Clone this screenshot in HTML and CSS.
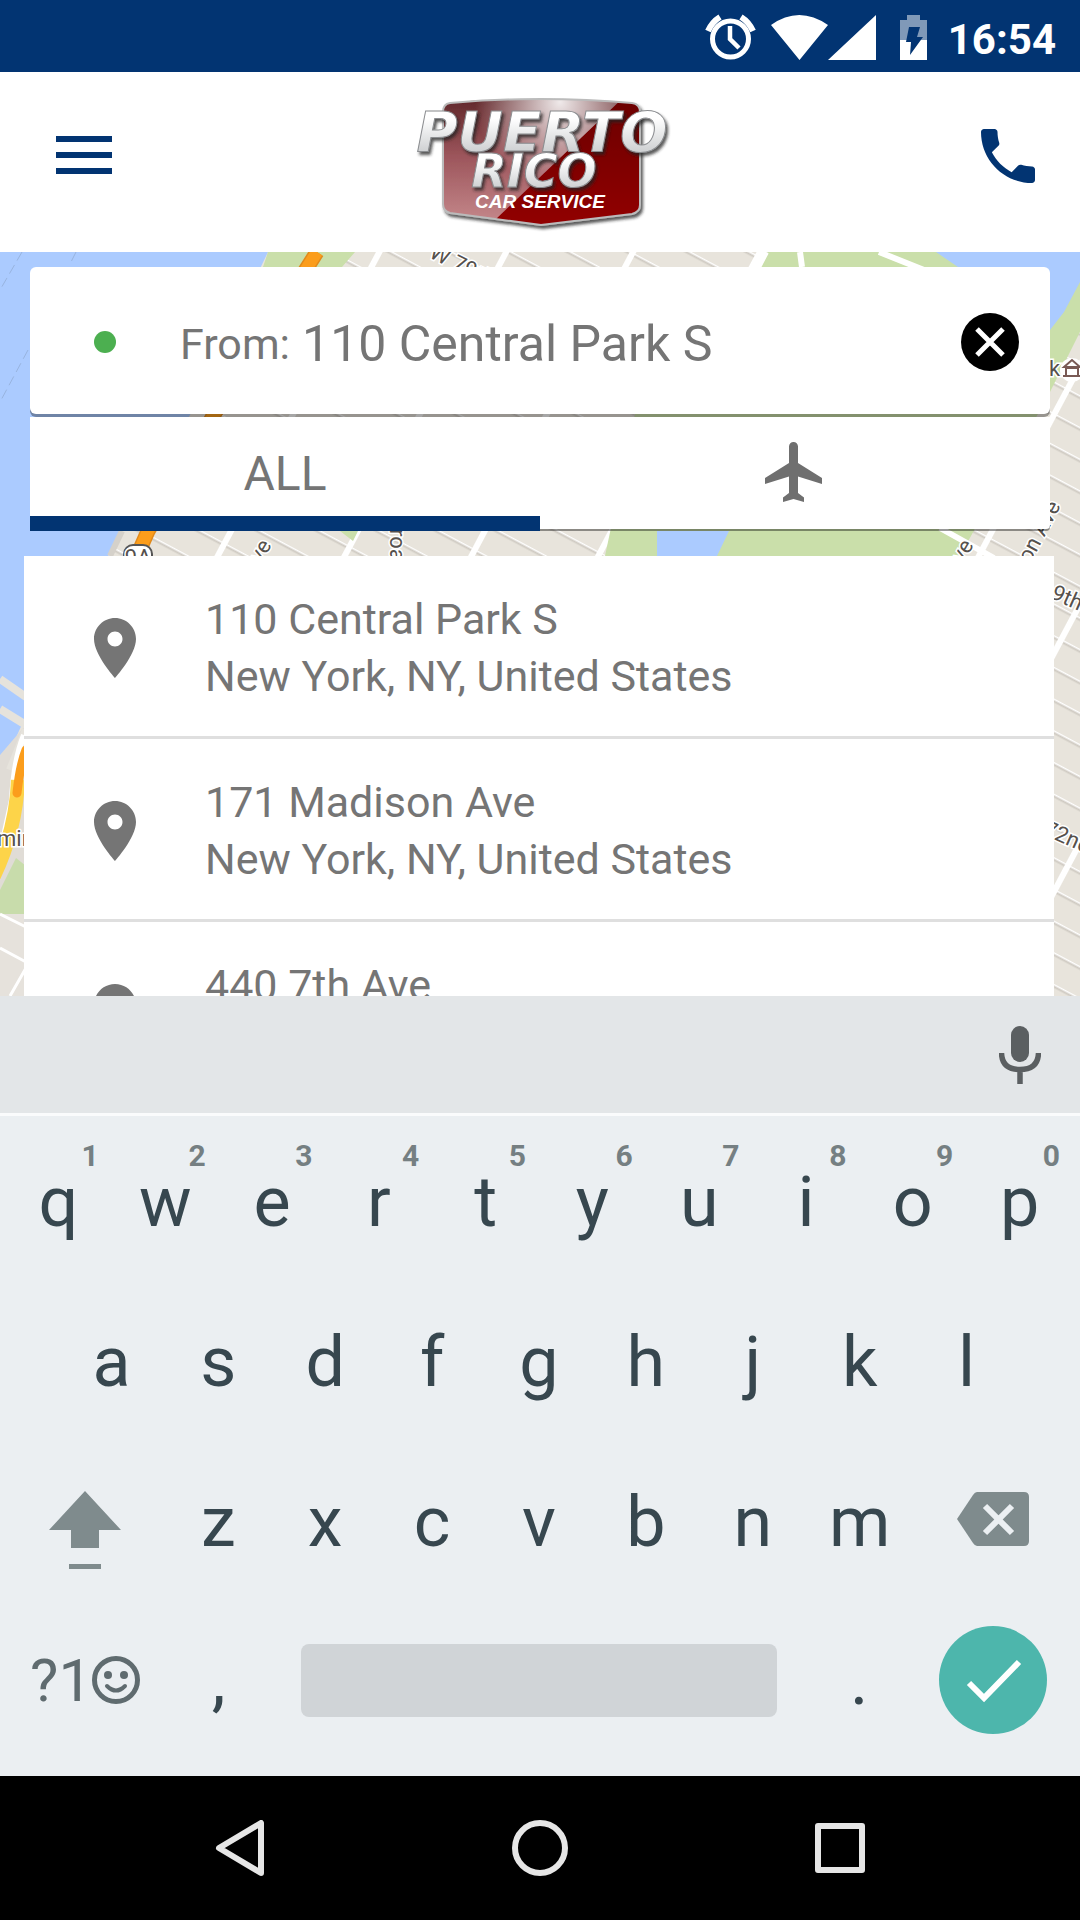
FILE: index.html
```html
<!DOCTYPE html>
<html lang="en">
<head>
  <meta charset="UTF-8" />
  <meta name="viewport" content="width=device-width, initial-scale=1.0"/>
  <title>Puerto Rico Car Service</title>
  <link rel="stylesheet" href="styles.css">
</head>
<body>

  <div class="status-bar">
    <svg width="51" height="46" viewBox="0 0 51 46" aria-hidden="true">
      <circle cx="25.500" cy="25" r="18" fill="none" stroke="#fff" stroke-width="5"/>
      <path d="M25 12v13l9 9" fill="none" stroke="#fff" stroke-width="4.500"/>
      <path d="M3 17Q7 8 15 3M48 17Q44 8 36 3" fill="none" stroke="#fff" stroke-width="6"/>
    </svg>
    <svg class="wifi" width="105" height="45" viewBox="0 0 105 45" aria-hidden="true">
      <path d="M0 10Q28 -10 57 10L28.500 45zM105 0v45H57z" fill="#fff"/>
    </svg>
    <svg class="battery" width="27" height="45" viewBox="0 0 27 45" aria-hidden="true">
      <path d="M7 0h13v5h7v20H0V5h7z" fill="#8099b8"/>
      <path d="M0 25h27v20H0z" fill="#fff"/>
      <path d="M9 12h11l-3 10h6L10 40l1-13H6z" fill="#023472"/>
    </svg>
    <span class="clock">16:54</span>
  </div>

  <header class="header">
    <button class="icon-btn" aria-label="Menu">
      <svg width="72" height="72" viewBox="0 0 72 72"><path d="M8 16h56v6H8zM8 32h56v6H8zM8 48h56v6H8z"/></svg>
    </button>
    <svg class="logo" width="300" height="140" viewBox="396 92 300 140" role="img" aria-label="Puerto Rico Car Service">
      <defs>
        <linearGradient id="steel" x1="0" y1="0" x2="0" y2="1">
          <stop offset="0.300" stop-color="#fff"/>
          <stop offset="0.800" stop-color="#cfd1d3"/>
        </linearGradient>
        <linearGradient id="shine" x1="0" y1="0" x2="0" y2="1">
          <stop offset="0" stop-color="#5d2528"/>
          <stop offset="0.450" stop-color="#9c555b"/>
          <stop offset="1" stop-color="#c98d90"/>
        </linearGradient>
        <radialGradient id="glow" gradientUnits="userSpaceOnUse" cx="560" cy="102" r="85">
          <stop offset="0" stop-color="#fff" stop-opacity="0.900"/>
          <stop offset="1" stop-color="#fff" stop-opacity="0"/>
        </radialGradient>
        <linearGradient id="red" x1="0" y1="0" x2="0" y2="1">
          <stop offset="0" stop-color="#6a0003"/>
          <stop offset="1" stop-color="#930006"/>
        </linearGradient>
        <filter id="drop" x="-10%" y="-10%" width="125%" height="135%">
          <feDropShadow dx="2" dy="3" stdDeviation="1.500" flood-color="#222" flood-opacity="0.750"/>
        </filter>
        <clipPath id="shield">
          <path d="M450 103Q541 95 632 103Q640 104 640 112V205Q640 212 632 214L541 225L450 213Q443 211 443 204V112Q443 104 450 103z"/>
        </clipPath>
      </defs>
      <g filter="url(#drop)">
        <g clip-path="url(#shield)">
          <path d="M440 95h205v135H440z" fill="url(#red)"/>
          <path d="M440 95h186L495 220v10h-55z" fill="url(#shine)"/>
          <path d="M440 95h186L495 220v10h-55z" fill="url(#glow)"/>
        </g>
        <path d="M450 103Q541 95 632 103Q640 104 640 112V205Q640 212 632 214L541 225L450 213Q443 211 443 204V112Q443 104 450 103z" fill="none" stroke="#bbb" stroke-width="2"/>
      </g>
      <g class="logo-name" filter="url(#drop)">
        <text x="542" y="151" text-anchor="middle">PUERTO</text>
        <text class="logo-rico" x="534" y="187" text-anchor="middle">RICO</text>
      </g>
      <text class="logo-sub" x="540" y="208" text-anchor="middle">CAR SERVICE</text>
    </svg>
    <button class="icon-btn" aria-label="Call">
      <svg width="72" height="72" viewBox="0 0 24 24"><path d="M6.620 10.790c1.440 2.830 3.760 5.140 6.590 6.590l2.200-2.200c.270-.270.670-.360 1.020-.240 1.120.370 2.330.570 3.570.570.550 0 1 .450 1 1V20c0 .550-.450 1-1 1-9.390 0-17-7.610-17-17 0-.550.450-1 1-1h3.500c.550 0 1 .450 1 1 0 1.250.200 2.450.570 3.570.110.350.030.740-.250 1.020l-2.200 2.200z"/></svg>
    </button>
  </header>

  <main class="map-area">
    <svg class="map" viewBox="0 252 1080 744" preserveAspectRatio="xMidYMin slice" aria-hidden="true">
      <defs>
        <pattern id="blocks" width="112" height="28" patternUnits="userSpaceOnUse" patternTransform="translate(1052 412) rotate(28)">
          <path d="M0 0h112v28H0z" fill="#e8e4dc"/>
          <path d="M0 2h112M2 0v28" stroke="#cfcac2" stroke-width="3"/>
          <path d="M0 0h112" stroke="#fff" stroke-width="3"/>
          <path d="M0 0v28" stroke="#fff" stroke-width="12"/>
        </pattern>
      </defs>
      <path d="M0 252h1080v744H0z" fill="url(#blocks)"/>
      <!-- Hudson river and the park -->
      <path d="M0 252h268L190 415L121 531L24 720L8 755H0z" fill="#abcbff"/>
      <path d="M268 252h87L342 267h-79zM340 531h18l-5 10zM768 252h312v80L1050 392L960 556H605L635 414z" fill="#cadfaa"/>
      <path d="M936 252h144v30L1064 312L1050 330zM657 531h72l-12 25h-60z" fill="#abcbff"/>
      <path d="M766 252l-9 17M879 252l60 24M800 252l2 15M940 528l54 30" stroke="#fff" stroke-width="6"/>
      <path d="M22 252L0 290M76 252l-6 12M28 350L0 402" fill="none" stroke="#98b4df" stroke-width="1" stroke-dasharray="10 5"/>
      <path d="M122 531l-12 25" stroke="#d5d1ca" stroke-width="6"/>
      <path d="M317 252L213 416L148 531L137 556" fill="none" stroke="#e08a1c" stroke-width="15"/>
      <path d="M317 252L213 416L148 531L137 556" fill="none" stroke="#fb9d1c" stroke-width="12"/>
      <!-- piers and west side highway -->
      <path d="M0 755L24 727v200H0z" fill="#e0dcd6"/>
      <path d="M0 679L26 697M0 709l26 16M10 770L26 730" stroke="#e6e3dc" stroke-width="8"/>
      <path d="M24 735Q14 760 12 800L-4 872" fill="none" stroke="#fff" stroke-width="6"/>
      <path d="M18 780Q16 830 -6 876" fill="none" stroke="#fdd449" stroke-width="14"/>
      <path d="M26 750Q20 765 17 793" fill="none" stroke="#fb9d1c" stroke-width="9" stroke-linecap="round"/>
      <path d="M0 890l16-32 10 8v62l-26-14z" fill="#c8dcab"/>
      <path d="M0 914h26v82H0z" fill="#e6e2dc"/>
      <path d="M0 914l26 13M0 948l26 14M10 996l16-28" stroke="#fff" stroke-width="3"/>
      <circle cx="1072" cy="370" r="12" fill="#fff"/>
      <path d="M1064 367l8-7 8 7zM1066 368h12v8h-12zM1063 376h17" fill="none" stroke="#795a55" stroke-width="2"/>
      <rect x="124" y="545" width="28" height="24" rx="9" fill="#fff" stroke="#555" stroke-width="2"/>
      <g class="map-text">
        <text x="138" y="565" text-anchor="middle">9A</text>
        <text transform="translate(428 257) rotate(26)">W 79th</text>
        <text transform="translate(261 564) rotate(-60)">ve</text>
        <text transform="translate(390 529) rotate(90)">road</text>
        <text transform="translate(963 564) rotate(-60)">ve</text>
        <text transform="translate(1030 564) rotate(-62)">on Ave</text>
        <text x="1049" y="376">k</text>
        <text transform="translate(1050 598) rotate(24)">9th</text>
        <text transform="translate(1042 834) rotate(24)">72nd</text>
        <text x="-3" y="846">min</text>
      </g>
    </svg>

    <div class="from-card">
      <span class="dot"></span>
      <label for="from">From:</label>
      <input id="from" type="text" value="110 Central Park S">
      <button class="clear" aria-label="Clear">
        <svg width="58" height="58" viewBox="0 0 58 58"><circle cx="29" cy="29" r="29" fill="#000"/><path d="M16 16l26 26M42 16L16 42" stroke="#fff" stroke-width="5"/></svg>
      </button>
    </div>

    <div class="tabs">
      <button class="tab active">ALL</button>
      <button class="tab" aria-label="Airports">
        <svg width="72" height="72" viewBox="0 0 24 24"><path d="M21 16v-2l-8-5V3.500c0-.830-.670-1.500-1.500-1.500S10 2.670 10 3.500V9l-8 5v2l8-2.500V19l-2 1.500V22l3.500-1 3.500 1v-1.500L13 19v-5.500l8 2.500z"/></svg>
      </button>
    </div>

    <ul class="places">
      <li class="place">
        <svg width="72" height="72" viewBox="0 0 24 24" aria-hidden="true"><path d="M12 2C8.130 2 5 5.130 5 9c0 5.250 7 13 7 13s7-7.750 7-13c0-3.870-3.130-7-7-7zm0 9.500c-1.380 0-2.500-1.120-2.500-2.500s1.120-2.500 2.500-2.500 2.500 1.120 2.500 2.500-1.120 2.500-2.500 2.500z"/></svg>
        <p>110 Central Park S<br>New York, NY, United States</p>
      </li>
      <li class="place">
        <svg width="72" height="72" viewBox="0 0 24 24" aria-hidden="true"><path d="M12 2C8.130 2 5 5.130 5 9c0 5.250 7 13 7 13s7-7.750 7-13c0-3.870-3.130-7-7-7zm0 9.500c-1.380 0-2.500-1.120-2.500-2.500s1.120-2.500 2.500-2.500 2.500 1.120 2.500 2.500-1.120 2.500-2.500 2.500z"/></svg>
        <p>171 Madison Ave<br>New York, NY, United States</p>
      </li>
      <li class="place">
        <svg width="72" height="72" viewBox="0 0 24 24" aria-hidden="true"><path d="M12 2C8.130 2 5 5.130 5 9c0 5.250 7 13 7 13s7-7.750 7-13c0-3.870-3.130-7-7-7zm0 9.500c-1.380 0-2.500-1.120-2.500-2.500s1.120-2.500 2.500-2.500 2.500 1.120 2.500 2.500-1.120 2.500-2.500 2.500z"/></svg>
        <p>440 7th Ave<br>New York, NY, United States</p>
      </li>
    </ul>
  </main>

  <div class="suggestions">
    <button class="mic" aria-label="Voice input">
      <svg width="42" height="58" viewBox="0 0 42 58"><rect x="12" y="0" width="18" height="36" rx="9" fill="#5b5f61"/><path d="M2.500 27Q3 43.500 21 43.500T39.500 27M21 43v15" fill="none" stroke="#5b5f61" stroke-width="5.500"/></svg>
    </button>
  </div>

  <div class="keyboard">
    <div class="key-row">
      <button class="key">q<sup>1</sup></button>
      <button class="key">w<sup>2</sup></button>
      <button class="key">e<sup>3</sup></button>
      <button class="key">r<sup>4</sup></button>
      <button class="key">t<sup>5</sup></button>
      <button class="key">y<sup>6</sup></button>
      <button class="key">u<sup>7</sup></button>
      <button class="key">i<sup>8</sup></button>
      <button class="key">o<sup>9</sup></button>
      <button class="key">p<sup>0</sup></button>
    </div>
    <div class="key-row middle">
      <button class="key">a</button>
      <button class="key">s</button>
      <button class="key">d</button>
      <button class="key">f</button>
      <button class="key">g</button>
      <button class="key">h</button>
      <button class="key">j</button>
      <button class="key">k</button>
      <button class="key">l</button>
    </div>
    <div class="key-row">
      <button class="key wide" aria-label="Shift">
        <svg width="72" height="96" viewBox="0 0 72 96"><path d="M36 17l36 39H50v18H22V56H0zM20 90h32v5H20z" fill="#7f8b8d"/></svg>
      </button>
      <button class="key">z</button>
      <button class="key">x</button>
      <button class="key">c</button>
      <button class="key">v</button>
      <button class="key">b</button>
      <button class="key">n</button>
      <button class="key">m</button>
      <button class="key wide" aria-label="Backspace">
        <svg width="72" height="60" viewBox="0 0 72 60"><path d="M20 0h47q5 0 5 5v44q0 5-5 5H20q-2 0-4-3L0 27L16 3q2-3 4-3z" fill="#7f8b8d"/><path d="M28 14l27 27M55 14L28 41" stroke="#ebeff2" stroke-width="6"/></svg>
      </button>
    </div>
    <div class="key-row bottom">
      <button class="key wide symbols">?1<svg width="48" height="48" viewBox="0 0 48 48" aria-hidden="true"><circle cx="24" cy="24" r="21.500" fill="none" stroke="#5f6b6f" stroke-width="5"/><circle cx="16" cy="19" r="4"/><circle cx="32" cy="19" r="4"/><path d="M15 30q9 9 18 0" fill="none" stroke="#5f6b6f" stroke-width="4" stroke-linecap="round"/></svg></button>
      <button class="key">,</button>
      <button class="key space" aria-label="Space"><span></span></button>
      <button class="key">.</button>
      <button class="key wide" aria-label="Done">
        <svg width="108" height="108" viewBox="0 0 108 108"><circle cx="54" cy="54" r="54" fill="#4db6ac"/><path d="M30 57l15 15 35-36" fill="none" stroke="#fff" stroke-width="6"/></svg>
      </button>
    </div>
  </div>

  <nav class="nav-bar">
    <button aria-label="Back"><svg width="56" height="56" viewBox="0 0 56 56"><path d="M49 3v50L7 28z"/></svg></button>
    <button aria-label="Home"><svg width="56" height="56" viewBox="0 0 56 56"><circle cx="28" cy="28" r="25"/></svg></button>
    <button aria-label="Recent apps"><svg width="56" height="56" viewBox="0 0 56 56"><rect x="6" y="6" width="44" height="44"/></svg></button>
  </nav>

</body>
</html>
```
FILE: styles.css
```css
* {
  box-sizing: border-box;
}

body {
  margin: 0;
  height: 100vh;
  display: flex;
  flex-direction: column;
  overflow: hidden;
  background: #fff;
  color: #757575;
  font-family: Roboto, sans-serif;
}

button {
  margin: 0;
  padding: 0;
  border: none;
  background: none;
  color: inherit;
  font: inherit;
  cursor: pointer;
}

svg {
  display: block;
  flex: none;
}

/* Status bar */

.status-bar {
  flex: none;
  height: 72px;
  padding: 2px 24px 0;
  display: flex;
  align-items: center;
  justify-content: flex-end;
  background: #023472;
  color: #fff;
}

.wifi {
  margin-left: 15px;
}

.battery {
  margin: 0 21px 0 24px;
}

.clock {
  font-size: 42px;
  font-weight: 700;
  line-height: 48px;
  padding-top: 5px;
}

/* Header */

.header {
  flex: none;
  height: 180px;
  padding: 0 36px 0 48px;
  display: flex;
  align-items: center;
  justify-content: space-between;
  background: #fff;
}

.icon-btn {
  fill: #023472;
  padding-bottom: 12px;
}

.logo-name {
  font-family: "DejaVu Sans", sans-serif;
  font-size: 56px;
  font-weight: 700;
  font-style: oblique;
  fill: url(#steel);
  stroke: #8b8d90;
  stroke-width: 1px;
}

.logo-rico {
  font-size: 46px;
}

.logo-sub {
  font-family: "Liberation Sans", sans-serif;
  font-size: 19px;
  font-weight: 700;
  font-style: italic;
  fill: #fff;
}

/* Map with the search on top */

.map-area {
  position: relative;
  flex: 1;
  min-height: 0;
  overflow: hidden;
  padding-top: 15px;
}

.map {
  position: absolute;
  top: 0;
  left: 0;
  width: 100%;
  height: 100%;
}

.map-text {
  font-size: 22px;
  fill: #55504c;
  stroke: #fff;
  stroke-width: 3px;
  paint-order: stroke;
}

.from-card {
  position: relative;
  height: 147px;
  margin: 0 30px;
  padding: 2px 31px 0 64px;
  display: flex;
  align-items: center;
  background: #fff;
  border-radius: 6px;
  box-shadow: 0 3px rgba(0, 0, 0, 0.35);
}

.dot {
  width: 22px;
  height: 22px;
  margin-right: 64px;
  border-radius: 50%;
  background: #4caf50;
}

.from-card label {
  padding-top: 4px;
  font-size: 43px;
  margin-right: 12px;
}

.from-card input {
  flex: 1;
  min-width: 0;
  padding: 4px 0 0;
  border: none;
  outline: none;
  background: none;
  color: inherit;
  font-family: inherit;
  font-size: 50px;
}

.tabs {
  position: relative;
  height: 112px;
  margin: 3px 30px 0;
  display: flex;
  background: #fff;
  border-radius: 0 0 4px 4px;
  box-shadow: 0 2px rgba(0, 0, 0, 0.4);
}

.tab {
  flex: 1;
  height: 114px;
  padding-bottom: 4px;
  display: flex;
  align-items: center;
  justify-content: center;
  font-size: 48px;
  fill: #6f6f6f;
}

.tab.active {
  padding: 13px 0 0;
  border-bottom: 15px solid #023472;
}

.places {
  position: relative;
  margin: 27px 26px 0 24px;
  padding: 0;
  list-style: none;
  background: #fff;
}

.place {
  height: 183px;
  padding: 3px 55px 0;
  display: flex;
  align-items: center;
  border-bottom: 3px solid #dfdfdf;
  fill: #757575;
}

.place p {
  margin: 0 0 0 54px;
  font-size: 43px;
  line-height: 57px;
}

/* Keyboard */

.suggestions {
  position: relative;
  flex: none;
  height: 120px;
  padding: 0 39px;
  display: flex;
  align-items: center;
  justify-content: flex-end;
  background: #e3e6e8;
  border-bottom: 3px solid #fafbfc;
}

.keyboard {
  flex: none;
  padding: 4px 7px 16px 5px;
  background: #ebeff2;
  color: #37474f;
}

.key-row {
  display: flex;
  height: 160px;
}

.key-row.middle {
  padding: 0 53px;
}

.key {
  position: relative;
  flex: 107;
  min-width: 0;
  padding-top: 4px;
  display: flex;
  align-items: center;
  justify-content: center;
  font-size: 70px;
}

.key sup {
  position: absolute;
  top: 18px;
  right: 13px;
  font-size: 30px;
  font-weight: 700;
  line-height: 36px;
  color: #757f82;
}

.key.wide {
  flex: 160;
}

.bottom .key {
  padding-top: 0;
}

.key.space {
  flex: 533;
}

.space span {
  width: 476px;
  height: 73px;
  border-radius: 8px;
  background: #d0d4d7;
}

.key.symbols {
  font-size: 60px;
  color: #5f6b6f;
  fill: #5f6b6f;
}

/* Navigation bar */

.nav-bar {
  flex: none;
  height: 144px;
  padding: 0 90px;
  display: flex;
  background: #000;
}

.nav-bar button {
  flex: 1;
  display: flex;
  align-items: center;
  justify-content: center;
}

.nav-bar svg {
  fill: none;
  stroke: #e6e6e6;
  stroke-width: 6px;
  stroke-linejoin: round;
}
```
